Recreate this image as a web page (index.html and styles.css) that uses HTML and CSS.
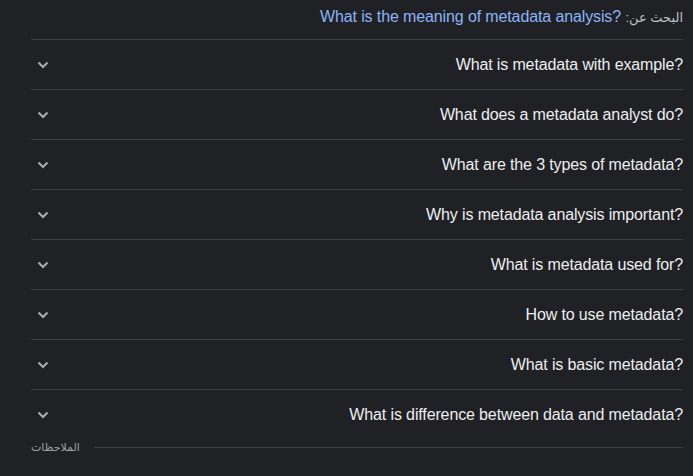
FILE: index.html
```html
<!DOCTYPE html>
<html lang="ar" dir="rtl">
<head>
<meta charset="utf-8">
<link rel="stylesheet" href="styles.css">
</head>
<body>
<div class="wrap">
  <div class="head"><span class="lbl">البحث عن:</span> <a class="q" dir="ltr" href="#">What is the meaning of metadata analysis?</a></div>
  <div class="list">
    <div class="row"><span class="t" dir="ltr">What is metadata with example?</span><svg class="chev" viewBox="0 0 12 8" width="12" height="8"><polyline points="1.5,1.5 6,6 10.5,1.5"/></svg></div>
    <div class="row"><span class="t" dir="ltr">What does a metadata analyst do?</span><svg class="chev" viewBox="0 0 12 8" width="12" height="8"><polyline points="1.5,1.5 6,6 10.5,1.5"/></svg></div>
    <div class="row"><span class="t" dir="ltr">What are the 3 types of metadata?</span><svg class="chev" viewBox="0 0 12 8" width="12" height="8"><polyline points="1.5,1.5 6,6 10.5,1.5"/></svg></div>
    <div class="row"><span class="t" dir="ltr">Why is metadata analysis important?</span><svg class="chev" viewBox="0 0 12 8" width="12" height="8"><polyline points="1.5,1.5 6,6 10.5,1.5"/></svg></div>
    <div class="row"><span class="t" dir="ltr">What is metadata used for?</span><svg class="chev" viewBox="0 0 12 8" width="12" height="8"><polyline points="1.5,1.5 6,6 10.5,1.5"/></svg></div>
    <div class="row"><span class="t" dir="ltr">How to use metadata?</span><svg class="chev" viewBox="0 0 12 8" width="12" height="8"><polyline points="1.5,1.5 6,6 10.5,1.5"/></svg></div>
    <div class="row"><span class="t" dir="ltr">What is basic metadata?</span><svg class="chev" viewBox="0 0 12 8" width="12" height="8"><polyline points="1.5,1.5 6,6 10.5,1.5"/></svg></div>
    <div class="row"><span class="t" dir="ltr">What is difference between data and metadata?</span><svg class="chev" viewBox="0 0 12 8" width="12" height="8"><polyline points="1.5,1.5 6,6 10.5,1.5"/></svg></div>
  </div>
  <div class="foot"><span class="rule"></span><span class="note">الملاحظات</span></div>
</div>
</body>
</html>
```
FILE: styles.css
```css
html, body {
  margin: 0;
  padding: 0;
  background: #202124;
}
body {
  font-family: "Liberation Sans", Arial, "DejaVu Sans", sans-serif;
  color: #e8eaed;
  height: 476px;
  overflow: hidden;
}
.wrap {
  padding: 0 10px 0 31px;
}
.head {
  height: 39px;
  box-sizing: border-box;
  padding-top: 7px;
  font-size: 16px;
  line-height: 20px;
}
.lbl {
  color: #bdc1c6;
  font-size: 13px;
}
.q {
  color: #8ab4f8;
  text-decoration: none;
  unicode-bidi: isolate;
  letter-spacing: -0.12px;
}
.row {
  height: 50px;
  box-sizing: border-box;
  border-top: 1px solid #3c4043;
  padding-top: 1px;
  display: flex;
  align-items: center;
  justify-content: space-between;
  font-size: 16px;
  line-height: 20px;
}
.row .t {
  color: #eceef0;
  unicode-bidi: isolate;
  letter-spacing: -0.13px;
}
.chev {
  margin-left: 6px;
}
.chev polyline {
  fill: none;
  stroke: #a5a9ad;
  stroke-width: 2.2;
}
.foot {
  display: flex;
  align-items: center;
  height: 16px;
  gap: 14px;
}
.rule {
  flex: 1;
  height: 1px;
  background: #3c4043;
}
.note {
  font-size: 11px;
  color: #9aa0a6;
  font-family: "DejaVu Sans", sans-serif;
}
```
